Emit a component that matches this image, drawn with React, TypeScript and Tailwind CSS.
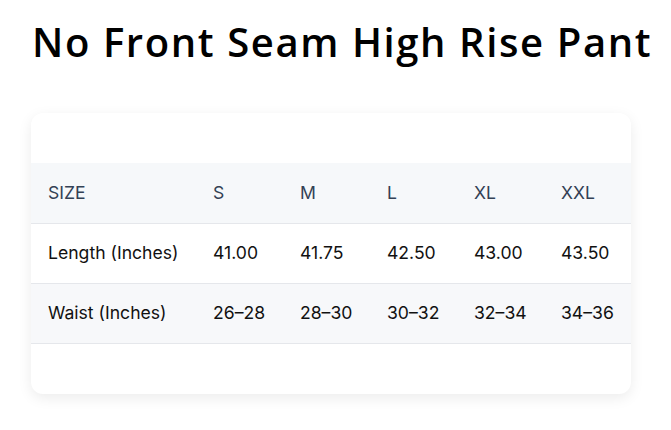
const sizes = ['S', 'M', 'L', 'XL', 'XXL'];

const rows = [
  { label: 'Length (Inches)', values: ['41.00', '41.75', '42.50', '43.00', '43.50'], shade: false },
  { label: 'Waist (Inches)', values: ['26–28', '28–30', '30–32', '32–34', '34–36'], shade: true },
];

export default function App() {
  return (
    <div className="min-h-[430px] bg-white">
      <h1
        className="pl-8 pt-[18px] text-[40px] leading-[48px] font-semibold text-black whitespace-nowrap tracking-[1.6px]"
        style={{ fontFamily: '"Open Sans", "Noto Sans", sans-serif' }}
      >
        No Front Seam High Rise Pant
      </h1>

      <div className="ml-[31px] mt-[47px] w-[600px] rounded-xl bg-white shadow-[0_4px_14px_rgba(0,0,0,0.08)] overflow-hidden">
        <div className="h-[50px]" />
        <table className="w-full border-collapse text-[17.6px]" style={{ fontFamily: 'Inter, sans-serif' }}>
          <thead>
            <tr className="bg-[#f6f8fa] border-b border-[#e5e7eb] h-[60px] text-[#334155]">
              <th className="w-[165px] pl-[17px] text-left font-normal">SIZE</th>
              {sizes.map((s) => (
                <th key={s} className="w-[87px] pl-[17px] text-left font-normal">{s}</th>
              ))}
            </tr>
          </thead>
          <tbody>
            {rows.map((r) => (
              <tr key={r.label} className={`h-[60px] border-b border-[#e5e7eb] text-[#111111] ${r.shade ? 'bg-[#f7f8fa]' : 'bg-white'}`}>
                <td className="pl-[17px]">{r.label}</td>
                {r.values.map((v) => (
                  <td key={v} className="pl-[17px]">{v}</td>
                ))}
              </tr>
            ))}
          </tbody>
        </table>
        <div className="h-[50px]" />
      </div>
    </div>
  );
}
